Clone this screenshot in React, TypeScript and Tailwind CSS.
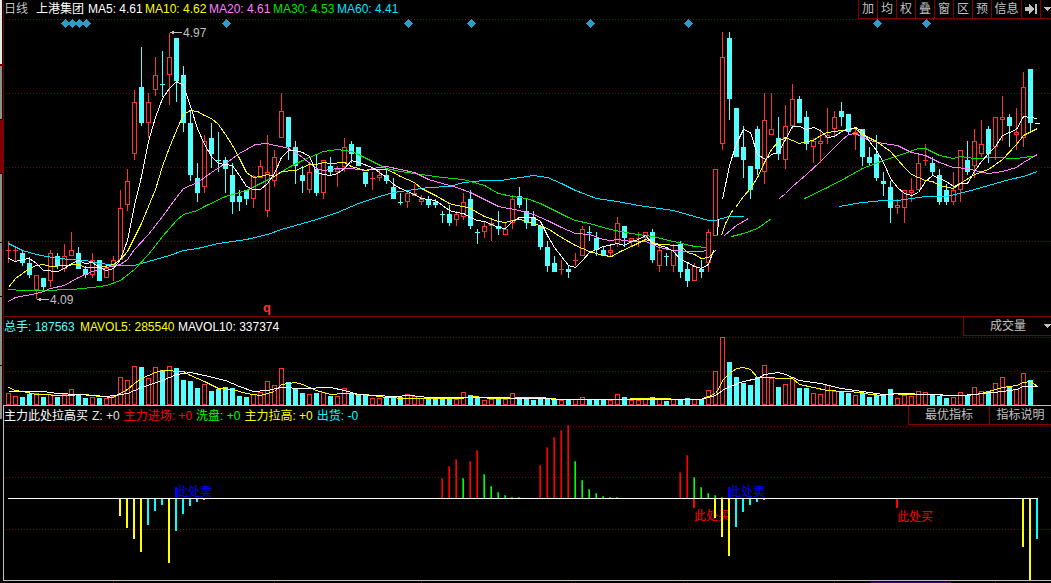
import React from 'react';

// [rising, high, body top, body bottom, low, volume top] in chart units
type Bar = [number, number, number, number, number, number];

const STEP = 7;
const cx = (i: number) => 8 + STEP * i;

const RED = '#ff3232';
const AQUA = '#54ffff';
const GRID = '#800000';
const VOL_BASE = 405;

const BARS: Bar[] = [
  [1, 241, 250, 250, 263, 393], [1, 246, 250, 250, 262, 396], [0, 250, 253, 263, 266, 397], [0, 257, 263, 275, 278, 394],
  [1, 275, 275, 290, 299, 393], [0, 278, 278, 287, 290, 397], [1, 250, 253, 281, 287, 394], [0, 253, 256, 266, 269, 397],
  [1, 244, 256, 269, 272, 394], [1, 232, 250, 256, 256, 389], [0, 247, 253, 269, 269, 394], [0, 266, 269, 275, 278, 398],
  [1, 253, 260, 275, 278, 397], [0, 260, 260, 281, 281, 398], [1, 265, 268, 278, 278, 398], [1, 256, 260, 266, 281, 396],
  [1, 190, 208, 260, 260, 377], [1, 169, 181, 205, 211, 380], [1, 90, 102, 154, 160, 366], [0, 47, 87, 123, 126, 367],
  [1, 93, 102, 123, 138, 378], [1, 57, 75, 90, 96, 367], [0, 51, 84, 84, 97, 370], [1, 33, 57, 75, 105, 366],
  [0, 38, 38, 81, 102, 368], [0, 66, 75, 123, 132, 380], [0, 110, 123, 175, 181, 381], [0, 163, 178, 193, 202, 388],
  [1, 135, 141, 187, 193, 384], [0, 123, 138, 154, 168, 391], [0, 132, 160, 160, 172, 389], [0, 157, 160, 169, 193, 387],
  [0, 163, 175, 202, 214, 388], [0, 190, 196, 202, 211, 396], [0, 190, 190, 199, 205, 397], [1, 175, 176, 199, 208, 394],
  [1, 160, 166, 178, 178, 392], [1, 135, 172, 211, 217, 381], [1, 150, 157, 181, 187, 385], [1, 93, 111, 138, 138, 368],
  [0, 117, 117, 147, 160, 382], [0, 141, 147, 166, 184, 389], [0, 166, 175, 181, 193, 393], [1, 165, 172, 190, 193, 394],
  [0, 155, 169, 193, 196, 393], [1, 160, 160, 193, 199, 392], [0, 157, 166, 172, 175, 396], [1, 166, 169, 172, 187, 396],
  [1, 138, 147, 167, 172, 388], [0, 141, 144, 154, 163, 393], [0, 147, 147, 166, 166, 394], [0, 172, 172, 184, 187, 394],
  [1, 172, 178, 178, 190, 398], [1, 170, 175, 178, 181, 398], [0, 168, 175, 181, 184, 398], [0, 178, 187, 199, 199, 397],
  [0, 193, 202, 202, 205, 397], [1, 190, 193, 202, 208, 394], [1, 184, 193, 196, 196, 396], [1, 195, 199, 202, 205, 398],
  [0, 196, 199, 205, 208, 398], [0, 199, 202, 205, 208, 399], [0, 211, 214, 214, 223, 399], [0, 205, 214, 223, 226, 398],
  [1, 211, 214, 220, 226, 399], [1, 193, 202, 217, 220, 392], [0, 190, 199, 226, 229, 395], [0, 229, 232, 232, 244, 398],
  [1, 221, 226, 232, 238, 400], [1, 220, 223, 226, 241, 399], [0, 211, 226, 229, 235, 398], [1, 223, 229, 235, 235, 399],
  [1, 195, 199, 223, 229, 393], [0, 187, 196, 205, 208, 398], [0, 199, 211, 223, 229, 398], [0, 211, 217, 226, 226, 400],
  [0, 226, 226, 247, 250, 398], [0, 241, 247, 266, 272, 398], [0, 256, 263, 272, 272, 400], [1, 260, 269, 269, 275, 400],
  [0, 265, 269, 272, 278, 399], [1, 253, 260, 260, 266, 399], [1, 226, 229, 256, 256, 397], [0, 226, 232, 232, 241, 399],
  [0, 232, 238, 250, 256, 399], [0, 246, 250, 256, 256, 399], [1, 244, 250, 253, 256, 400], [1, 217, 223, 244, 247, 394],
  [0, 226, 226, 238, 247, 397], [1, 238, 238, 241, 247, 400], [1, 232, 238, 238, 247, 400], [1, 232, 232, 238, 241, 399],
  [0, 229, 232, 260, 263, 397], [1, 244, 250, 266, 272, 398], [0, 253, 256, 256, 266, 401], [1, 244, 250, 266, 272, 399],
  [0, 241, 244, 272, 278, 399], [0, 263, 269, 281, 287, 398], [1, 263, 266, 281, 281, 399], [0, 260, 269, 272, 278, 399],
  [1, 229, 232, 263, 272, 390], [1, 169, 169, 236, 236, 371], [1, 32, 57, 144, 150, 337], [0, 32, 38, 99, 120, 362],
  [0, 108, 108, 157, 157, 377], [0, 126, 147, 160, 178, 383], [0, 166, 166, 190, 199, 385], [0, 126, 129, 169, 175, 377],
  [1, 93, 120, 172, 184, 365], [1, 93, 129, 135, 135, 378], [0, 117, 138, 154, 160, 387], [1, 105, 126, 160, 169, 384],
  [1, 84, 99, 126, 129, 377], [0, 96, 99, 123, 123, 388], [0, 111, 117, 144, 150, 388], [1, 138, 141, 147, 163, 393],
  [1, 129, 141, 144, 163, 394], [1, 108, 135, 138, 144, 385], [1, 111, 117, 129, 138, 391], [0, 102, 111, 117, 126, 392],
  [0, 114, 114, 132, 135, 393], [1, 127, 132, 135, 150, 395], [0, 129, 129, 157, 166, 393], [0, 147, 157, 163, 166, 397],
  [0, 135, 154, 178, 181, 395], [0, 172, 181, 184, 196, 395], [0, 181, 187, 208, 223, 389], [1, 199, 205, 208, 214, 398],
  [1, 190, 190, 208, 223, 395], [1, 178, 190, 193, 202, 396], [1, 154, 163, 190, 190, 391], [1, 144, 160, 160, 166, 392],
  [0, 157, 163, 172, 175, 395], [0, 169, 175, 202, 205, 396], [0, 184, 190, 202, 205, 398], [1, 172, 190, 202, 205, 397],
  [1, 150, 150, 190, 202, 392], [0, 141, 160, 172, 175, 395], [1, 129, 141, 166, 178, 387], [1, 120, 144, 154, 157, 391],
  [0, 126, 129, 154, 163, 391], [1, 117, 117, 147, 160, 383], [1, 96, 117, 120, 141, 377], [0, 114, 117, 126, 147, 386],
  [1, 108, 132, 135, 150, 389], [1, 72, 87, 138, 147, 373], [0, 69, 69, 123, 131, 380],
];

const PRICE_LINES = [
  {
    color: '#00e5ff',
    parts: [
      '8,243 22,250 36,254 57,258 85,260 99,263 120,265 134,265 148,261 169,255 183,250 197,248 218,243 246,239 267,234 281,229 302,223 316,219 337,212 358,203 379,196 393,192 407,190 428,187 449,186 463,182 484,180 500,180 520,177 533,175 547,177 561,183 575,190 596,198 617,201 638,205 673,210 694,216 708,220 715,220 728,216 743,216',
      '839,206 850,204 862,202 883,200 897,200 911,198 925,196 946,196 967,191 988,185 1009,179 1023,176 1037,171',
    ],
  },
  {
    color: '#00e600',
    parts: [
      '8,289 22,290 43,290 71,289 92,287 106,285 120,280 134,269 148,254 162,236 176,220 183,214 197,210 204,206 225,196 246,190 260,183 274,176 288,167 302,160 323,151 337,149 351,151 358,154 372,161 386,168 400,171 421,174 442,177 463,179 484,185 498,193 512,196 526,198 540,203 554,210 568,217 575,220 589,223 610,229 631,233 652,236 673,241 694,246 706,247',
      '731,236 743,233 757,228 771,218',
      '804,198 827,187 848,176 862,168 883,160 904,153 918,148 925,148 939,155 953,158 960,156 974,158 995,157 1016,158 1037,155',
    ],
  },
  {
    color: '#ff80ff',
    parts: [
      '8,301 15,297 36,293 43,291 50,288 64,285 78,277 92,271 106,267 120,264 127,259 134,249 148,234 162,216 176,197 183,188 197,182 211,172 225,163 232,158 239,153 255,144 267,143 274,145 281,146 288,148 295,152 302,157 316,168 323,170 337,168 351,168 365,170 372,168 386,166 400,169 414,172 428,179 442,183 456,187 470,192 484,199 498,206 519,210 533,214 547,220 561,227 575,233 589,234 603,239 610,240 617,239 631,241 645,241 659,247 673,250 687,251 701,251 706,250',
      '724,235 736,225 748,218',
      '779,198 785,193 792,186 806,174 820,161 834,147 841,140 848,134 855,133 869,140 883,143 897,145 911,152 925,155 939,162 953,167 967,168 974,170 988,173 1002,171 1016,167 1023,162 1037,154',
    ],
  },
  {
    color: '#ffff00',
    parts: [
      '8,287 15,278 22,273 29,268 36,265 43,264 50,266 64,265 78,264 85,267 99,267 113,264 120,259 127,251 134,237 141,223 148,206 155,189 162,166 169,147 176,130 183,114 190,110 197,111 204,115 211,118 218,124 225,134 232,145 239,158 246,172 253,177 260,176 267,174 274,176 281,171 295,170 302,167 309,164 316,164 323,162 330,163 344,162 351,166 365,170 372,169 386,169 393,172 400,176 414,182 421,188 435,195 449,203 456,205 463,206 470,208 484,216 498,221 505,222 512,220 520,219 533,223 547,228 561,237 575,245 589,251 603,255 611,256 620,251 631,246 645,239 659,244 680,245 687,252 694,254 701,258 708,257 715,250',
      '721,235 725,223 732,210',
      '735,207 743,196 750,188 757,177 764,162 771,149 778,141 785,137 792,140 799,143 806,141 813,140 820,135 827,132 834,131 848,129 855,128 862,134 876,141 890,151 904,167 911,174 925,180 932,181 939,185 953,188 960,183 974,174 988,169 1002,159 1016,144 1023,135 1037,128',
    ],
  },
  {
    color: '#ffffff',
    parts: [
      '8,258 15,261 22,259 29,258 36,263 43,270 57,271 64,268 71,263 78,260 85,263 92,262 99,267 106,270 113,268 120,259 127,240 134,205 141,176 148,141 155,117 162,98 169,88 176,81 183,85 190,106 197,128 204,144 211,156 218,163 232,165 239,175 246,186 253,189 260,189 267,183 274,173 281,157 288,150 295,150 302,152 309,156 316,172 323,174 330,175 337,173 344,168 351,160 358,162 372,167 379,172 386,177 393,184 400,188 414,194 421,198 435,200 442,205 449,210 456,212 463,213 470,217 477,220 484,221 491,224 498,227 505,228 512,221 519,217 533,217 540,221 547,235 554,247 561,256 568,265 575,267 582,260 589,252 603,246 617,243 624,245 631,241 638,239 645,235 652,243 666,247 673,251 680,259 687,262 694,266 701,268 708,264 713,250',
      '717,235 718,219',
      '722,199 729,165 736,143 743,129 750,132 757,154 765,159 771,154 778,152 785,139 792,126 799,126 806,129 813,127 820,130 827,137 834,136 841,131 848,129 855,127 862,131 869,141 876,150 883,162 890,178 897,187 904,193 911,195 918,192 925,181 932,175 939,178 946,181 953,186 960,183 967,183 974,171 981,161 988,153 995,146 1002,135 1009,132 1016,129 1023,116 1037,118',
    ],
  },
];

const VOLUME_LINES = [
  {
    color: '#ffff00',
    parts: [
      '8,387 15,390 22,391 36,394 64,395 85,394 99,396 113,397 120,393 127,389 134,383 141,378 148,375 155,372 162,370 183,371 190,375 204,381 218,388 232,389 246,393 260,395 267,393 274,391 281,384 295,382 302,384 316,390 330,394 344,393 365,394 386,397 407,398 460,398 475,396 490,398 540,397 560,399 620,399 640,398 700,399 708,396 715,393 719,387 722,380 729,373 736,368 743,367 750,369 757,377 792,378 799,384 813,387 827,390 862,392 869,394 883,395 890,393 904,394 925,394 953,395 967,395 981,393 995,389 1002,387 1016,385 1023,382 1030,381 1037,386',
    ],
  },
  {
    color: '#ffffff',
    parts: [
      '8,391 43,391 57,393 78,394 106,396 127,393 141,387 162,380 176,374 190,372 204,375 225,380 239,386 253,391 267,390 281,387 302,388 330,387 344,390 358,394 393,396 410,395 428,397 478,397 540,398 560,399 700,399 715,395 722,390 729,386 743,381 757,378 764,374 778,372 785,374 799,380 820,383 841,388 862,391 883,394 904,393 925,394 960,395 974,394 1002,391 1016,389 1023,386 1037,386',
    ],
  },
];

const DIAMONDS = [66, 73, 80, 87, 227, 409, 472, 591, 689, 878, 927];

// Rising bars above the zero line: [bar index, top]
const ABOVE_RED = [[62, 478], [63, 466], [64, 459], [66, 461], [67, 450], [76, 465], [77, 447], [78, 437], [79, 430], [80, 425], [96, 472], [97, 455]];
const ABOVE_GREEN = [[65, 478], [68, 474], [69, 486], [70, 492], [71, 495], [72, 497], [73, 497], [81, 461], [82, 480], [83, 489], [84, 493], [85, 496], [86, 497], [87, 497], [98, 477], [99, 487], [100, 493], [101, 495], [102, 497], [103, 497]];
// Bars hanging under the zero line: [bar index, bottom]
const BELOW_YELLOW = [[16, 516], [17, 528], [18, 539], [19, 552], [23, 563], [101, 518], [102, 537], [103, 556], [145, 547], [146, 580]];
const BELOW_AQUA = [[20, 525], [21, 511], [22, 505], [24, 531], [25, 514], [26, 506], [27, 502], [28, 500], [104, 527], [105, 512], [106, 505], [107, 502], [108, 500], [147, 539]];
const BELOW_RED = [[98, 508], [127, 508]];

const GridLine = ({ y }: { y: number }) => (
  <line x1={6} x2={1051} y1={y + 0.5} y2={y + 0.5} stroke={GRID} strokeDasharray="1 2" />
);

const Lines = ({ sets }: { sets: { color: string; parts: string[] }[] }) => (
  <g transform="translate(.5 .5)" fill="none">
    {sets.map(s => s.parts.map(p => <polyline key={s.color + p.slice(0, 8)} points={p} stroke={s.color} />))}
  </g>
);

const Candle = ({ bar, i }: { bar: Bar; i: number }) => {
  const [rising, high, top, bottom, low] = bar;
  const x = cx(i);
  const color = rising ? RED : AQUA;
  return (
    <g fill={color}>
      {high < top && <rect x={x} y={high} width={1} height={top - high} />}
      {low > bottom && <rect x={x} y={bottom} width={1} height={low - bottom} />}
      {top === bottom && <rect x={x - 2} y={top} width={5} height={1} />}
      {top < bottom && !rising && <rect x={x - 2} y={top} width={5} height={bottom - top} />}
      {top < bottom && !!rising && (
        <rect x={x - 1.5} y={top + 0.5} width={4} height={bottom - top - 1} fill="none" stroke={RED} />
      )}
    </g>
  );
};

const PriceChart = () => (
  <svg className="block w-full h-auto" viewBox="4 19 1047 297" shapeRendering="crispEdges">
    {[19, 93, 167, 241].map(y => <GridLine key={y} y={y} />)}
    {DIAMONDS.map(x => <path key={x} d={`M${x - 5} 23.5l4.5-4.5 4.5 4.5-4.5 4.5z`} fill="#2e9bcb" />)}
    {BARS.map((b, i) => <Candle key={i} bar={b} i={i} />)}
    <rect x={1035} y={123} width={5} height={1} fill="#fff" />
    <Lines sets={PRICE_LINES} />
    <g fill="#c0c0c0" fontSize={12}>
      <path d="M170 32h2v-1h2v3h-2v-1h-2zM172 32h10v1h-10z" />
      <text x={183} y={37}>4.97</text>
      <path d="M37 299h2v-1h2v3h-2v-1h-2zM39 299h10v1h-10z" />
      <text x={50} y={304}>4.09</text>
    </g>
    <text x={263} y={312} fill={RED} fontSize={13} fontWeight={700}>q</text>
  </svg>
);

const VolumeChart = () => (
  <svg className="block w-full h-auto" viewBox="4 336 1047 69" shapeRendering="crispEdges">
    {[337, 371].map(y => <GridLine key={y} y={y} />)}
    {BARS.map(([rising, , , , , top], i) =>
      rising ? (
        <rect key={i} x={cx(i) - 1.5} y={top + 0.5} width={4} height={VOL_BASE - top - 1} fill="#000" stroke={RED} />
      ) : (
        <rect key={i} x={cx(i) - 2} y={top} width={5} height={VOL_BASE - top} fill={AQUA} />
      )
    )}
    <Lines sets={VOLUME_LINES} />
  </svg>
);

const SignalChart = () => (
  <svg className="block w-full h-auto" viewBox="4 425 1047 155" shapeRendering="crispEdges">
    {[426, 477, 529].map(y => <GridLine key={y} y={y} />)}
    <g fontSize={12} fill="#f00">
      <text x={694} y={520}>此处买</text>
      <text x={897} y={521}>此处买</text>
    </g>
    {ABOVE_RED.map(([i, y]) => (
      <g key={i}>
        <rect x={cx(i) - 1} y={y} width={2} height={498 - y} fill="#a00000" />
        <rect x={cx(i)} y={y + 1} width={1} height={497 - y} fill="#f00" />
      </g>
    ))}
    {ABOVE_GREEN.map(([i, y]) => (
      <g key={i}>
        <rect x={cx(i) - 1} y={y} width={2} height={498 - y} fill="#00a000" />
        <rect x={cx(i)} y={y + 1} width={1} height={497 - y} fill="#0f0" />
      </g>
    ))}
    <g fontSize={12} fill="#00f">
      <rect x={175} y={487} width={2} height={11} />
      <text x={176} y={496}>此处卖</text>
      <rect x={728} y={487} width={2} height={11} />
      <text x={729} y={496}>此处卖</text>
    </g>
    {BELOW_YELLOW.map(([i, y]) => <rect key={i} x={cx(i) - 1} y={499} width={2} height={y - 499} fill="#ff0" />)}
    {BELOW_AQUA.map(([i, y]) => <rect key={i} x={cx(i) - 1} y={499} width={2} height={y - 499} fill="#0ff" />)}
    {BELOW_RED.map(([i, y]) => <rect key={i} x={cx(i) - 1} y={499} width={2} height={y - 499} fill="#f00" />)}
    <rect x={8} y={498} width={1030} height={1} fill="#fff" />
  </svg>
);

const TOOLS = ['加', '均', '权', '叠', '窗', '区', '预'];

const Caret = () => (
  <svg className="block h-1 w-[7px]" viewBox="0 0 7 4" shapeRendering="crispEdges">
    <path d="M0 0h7L3.5 4z" fill="#c0c0c0" />
  </svg>
);

export default function App() {
  return (
    <div className="flex min-h-screen overflow-hidden bg-black font-['Liberation_Sans','Noto_Sans_CJK_SC',sans-serif] text-[12px] leading-[18px] text-[#c0c0c0]">
      {/* edge of the side tabs */}
      <aside className="flex w-[3px] shrink-0 flex-col">
        <div className="h-16 w-0.5 bg-[#e8e8e8]" />
        <div className="h-0.5 bg-[#800000]" />
        <div className="h-[53px] w-0.5 bg-[#909090]" />
        <div className="mt-px h-[53px] bg-[#800000]" />
        <div className="mt-px h-[68px] w-0.5 bg-[#909090]" />
        <div className="mt-px h-[53px] w-0.5 bg-[#909090]" />
        <div className="mt-px h-[68px] w-0.5 bg-[#909090]" />
        <div className="mt-px h-[53px] w-0.5 bg-[#909090]" />
      </aside>

      <main className="min-w-0 flex-1">
        <section className="border-l border-[#800000]">
          <header className="flex h-[19px] justify-between whitespace-nowrap">
            <div className="flex">
              <span className="w-8">日线</span>
              <h1 className="w-[52px] text-white">上港集团</h1>
              <span className="w-[57px] text-white">MA5: 4.61</span>
              <span className="w-16 text-[#ffff00]">MA10: 4.62</span>
              <span className="w-16 text-[#ff80ff]">MA20: 4.61</span>
              <span className="w-16 text-[#00e600]">MA30: 4.53</span>
              <span className="w-16 text-[#00e5ff]">MA60: 4.41</span>
            </div>
            <nav className="flex border-b border-[#800000]">
              {TOOLS.map(t => (
                <button key={t} className="w-[19px] border-l border-[#800000] text-center">{t}</button>
              ))}
              <button className="w-[30px] border-l border-[#800000] text-center">信息</button>
              <button aria-label="最后" className="flex w-[19px] items-center justify-center border-l border-[#800000]">
                <svg className="h-3 w-3" viewBox="0 0 12 12" shapeRendering="crispEdges">
                  <path d="M0 4h4V1l5 5-5 5V8H0zM10 1h2v10h-2z" fill="#c0c0c0" />
                </svg>
              </button>
              <button aria-label="更多" className="flex w-[11px] items-center justify-end border-l border-[#800000]">
                <Caret />
              </button>
            </nav>
          </header>
          <PriceChart />
        </section>

        <section className="border-t border-l border-[#800000]">
          <header className="flex h-[19px] justify-between whitespace-nowrap">
            <div className="flex gap-1 leading-5">
              <span className="w-[72px] text-[#54ffff]">总手: 187563</span>
              <span className="w-[94px] text-[#ffff00]">MAVOL5: 285540</span>
              <span className="text-white">MAVOL10: 337374</span>
            </div>
            <label className="relative flex w-[88px] border-b border-l border-[#800000]">
              <select aria-label="副图指标" className="w-full appearance-none bg-black pl-[26px] text-[#c0c0c0] outline-none">
                <option>成交量</option>
              </select>
              <span className="pointer-events-none absolute top-[7px] right-0"><Caret /></span>
            </label>
          </header>
          <VolumeChart />
        </section>

        <section className="border-y border-l border-[#c0c0c0]">
          <header className="flex h-[19px] justify-between whitespace-nowrap">
            <div className="flex gap-1 leading-5">
              <span className="text-white">主力此处拉高买</span>
              <span className="text-[#e0e0e0]">Z: +0</span>
              <span className="text-[#ff0000]">主力进场: +0</span>
              <span className="text-[#00ff00]">洗盘: +0</span>
              <span className="text-[#ffff00]">主力拉高: +0</span>
              <span className="text-[#00ffff]">出货: -0</span>
            </div>
            <div className="flex border-b border-[#800000]">
              <button className="w-[81px] border-l border-[#800000] text-center">最优指标</button>
              <button className="w-[62px] border-l border-[#800000] text-center">指标说明</button>
            </div>
          </header>
          <SignalChart />
        </section>

        <svg className="block w-full h-auto" viewBox="3 581 1048 2" shapeRendering="crispEdges">
          {[4, 113, 274, 421, 575, 687, 834, 995].map(x => <rect key={x} x={x} y={582} width={1} height={1} fill={GRID} />)}
          <rect x={870} y={582} width={81} height={1} fill="#4b0082" />
        </svg>
      </main>
    </div>
  );
}
